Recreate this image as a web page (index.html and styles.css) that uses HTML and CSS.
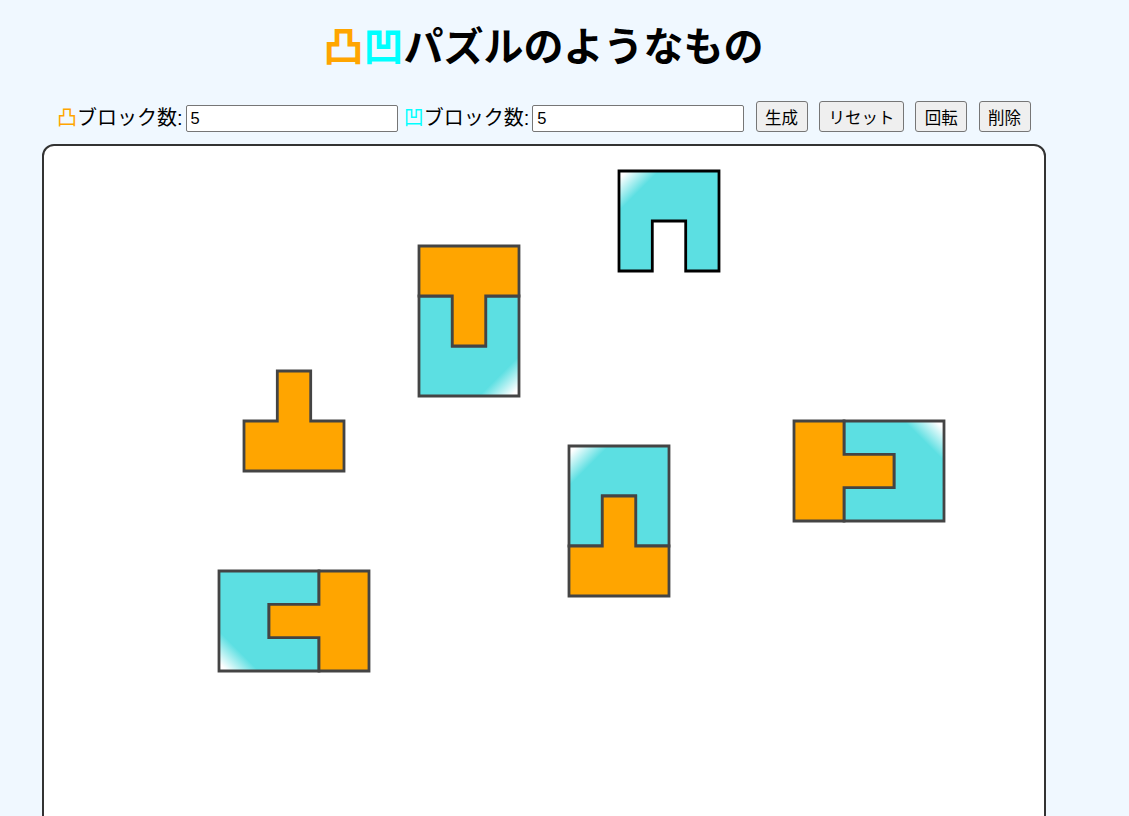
FILE: index.html
```html
<!DOCTYPE html>
<html lang="ja">
<head>
<meta charset="utf-8">
<title>凸凹パズルのようなもの</title>
<link rel="stylesheet" href="styles.css">
</head>
<body>
<main class="app">
  <h1 class="title"><span class="convex">凸</span><span class="concave">凹</span>パズルのようなもの</h1>
  <div class="controls">
    <label class="field"><span class="field-label"><span class="convex">凸</span>ブロック数:</span><input class="count" type="number" value="5"></label>
    <label class="field"><span class="field-label"><span class="concave">凹</span>ブロック数:</span><input class="count" type="number" value="5"></label>
    <button class="btn" type="button">生成</button>
    <button class="btn" type="button">リセット</button>
    <button class="btn" type="button">回転</button>
    <button class="btn" type="button">削除</button>
  </div>
  <div class="board">
    <svg class="board-svg" width="1000" height="800" viewBox="44 146 1000 800" xmlns="http://www.w3.org/2000/svg">
      <defs>
        <linearGradient id="shine" x1="0" y1="0" x2="1" y2="1">
          <stop offset="0.04" stop-color="#ffffff"/>
          <stop offset="0.2" stop-color="#5cdfe2"/>
          <stop offset="1" stop-color="#5cdfe2"/>
        </linearGradient>
        <path id="concave" d="M0 0H100V100H66.7V50H33.3V100H0Z"/>
        <path id="convex" d="M33.3 0H66.7V50H100V100H0V50H33.3Z"/>
      </defs>
      <use href="#concave" class="piece selected" fill="url(#shine)" transform="translate(619 171)"/>

      <use href="#concave" class="piece" fill="url(#shine)" transform="translate(519 396) rotate(180)"/>
      <use href="#convex" class="piece orange" transform="translate(519 346) rotate(180)"/>

      <use href="#convex" class="piece orange" transform="translate(244 371)"/>

      <use href="#concave" class="piece" fill="url(#shine)" transform="translate(569 446)"/>
      <use href="#convex" class="piece orange" transform="translate(569 496)"/>

      <use href="#concave" class="piece" fill="url(#shine)" transform="translate(944 421) rotate(90)"/>
      <use href="#convex" class="piece orange" transform="translate(894 421) rotate(90)"/>

      <use href="#concave" class="piece" fill="url(#shine)" transform="translate(219 671) rotate(270)"/>
      <use href="#convex" class="piece orange" transform="translate(269 671) rotate(270)"/>
    </svg>
  </div>
</main>
</body>
</html>
```
FILE: styles.css
```css
* { box-sizing: border-box; }
html, body { margin: 0; height: 100%; }
body {
  background: #f0f8ff;
  font-family: "Liberation Sans", "Noto Sans CJK JP", sans-serif;
  color: #000;
  overflow: hidden;
}
.app {
  width: 1004px;
  margin-left: 42px;
  display: flex;
  flex-direction: column;
}
.title {
  margin: 18px 0 25px;
  padding-right: 1px;
  font-size: 40px;
  line-height: 58px;
  font-weight: 700;
  text-align: center;
}
.convex { color: #ffa500; }
.concave { color: #00ffff; }
.controls {
  display: flex;
  align-items: flex-end;
  padding-left: 15px;
  gap: 11.33px;
  height: 31px;
  font-size: 20px;
}
.field {
  display: flex;
  align-items: center;
  gap: 3px;
  line-height: 27px;
  white-space: pre;
}
.field + .field { margin-left: -5.2px; }
.count {
  width: 212px;
  height: 27px;
  padding: 1px 2px 1px 4px;
  font: 16.5px "Liberation Sans", sans-serif;
  background: #fff;
  border: 1px solid #767676;
  border-radius: 2px;
  appearance: textfield;
}
.btn {
  height: 31px;
  padding: 0 8.5px;
  font: 16.5px "Liberation Sans", "Noto Sans CJK JP", sans-serif;
  background: #efefef;
  border: 1px solid #767676;
  border-radius: 3px;
  color: #000;
}
.board {
  margin-top: 12px;
  height: 800px;
  background: #fff;
  border: 2px solid #333;
  border-radius: 12px;
  overflow: hidden;
}
.board-svg { display: block; }
.piece { stroke: #444; stroke-width: 2.8; }
.piece.orange { fill: #ffa500; }
.piece.selected { stroke: #000; }
```
